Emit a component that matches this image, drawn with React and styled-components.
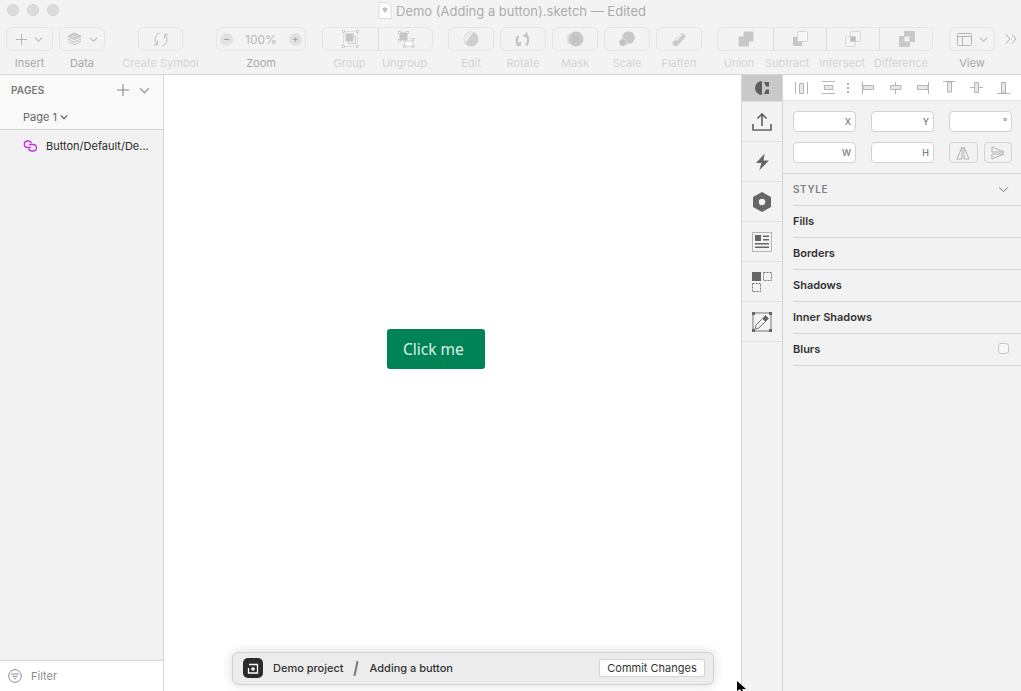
import React from "react";
import styled, { createGlobalStyle } from "styled-components";

const Global = createGlobalStyle`
  html, body { margin: 0; padding: 0; background: #fff; }
  body { font-family: Inter, "Liberation Sans", sans-serif; overflow: hidden; }
  * { box-sizing: border-box; }
`;

const Line = "#d6d6d6";

const Chevron = ({ size = 9, color = "#b5b5b5", w = 1.2 }) => (
  <svg width={size} height={size} viewBox="0 0 10 10" fill="none" stroke={color} strokeWidth={w}>
    <path d="M1 3l4 4 4-4" />
  </svg>
);

const Handle = ({ x, y }) => (
  <rect x={x - 1} y={y - 1} width="2" height="2" fill="#fff" stroke="#c0c0c0" strokeWidth=".7" />
);

const GroupIcon = () => (
  <svg width="17" height="18" viewBox="0 0 17 18">
    <rect x="1.5" y="1.5" width="14" height="15" fill="none" stroke="#dedede" />
    <rect x="3.5" y="3.5" width="8" height="8" fill="#c6c6c6" />
    <path d="M11.5 6.5h2v7h-7v-2" fill="none" stroke="#cbcbcb" />
    <Handle x={1.5} y={1.5} />
    <Handle x={15.5} y={1.5} />
    <Handle x={1.5} y={16.5} />
    <Handle x={15.5} y={16.5} />
  </svg>
);

const UngroupIcon = () => (
  <svg width="17" height="17" viewBox="0 0 17 17">
    <rect x="1.5" y="1.5" width="8" height="8" fill="#c6c6c6" />
    <rect x="6.5" y="10" width="8.5" height="5.5" fill="#fff" stroke="#d4d4d4" />
    <Handle x={1.5} y={1.5} />
    <Handle x={9.5} y={1.5} />
    <Handle x={1.5} y={9.5} />
    <Handle x={6.5} y={15.5} />
    <Handle x={15} y={15.5} />
    <Handle x={15} y={8.5} />
  </svg>
);

const EditIcon = () => (
  <svg width="16" height="16" viewBox="0 0 16 16">
    <circle cx="8" cy="8" r="7.5" fill="#cfcfcf" />
    <path d="M1 8a7 7 0 0 1 9.5-6.5L2.5 12A7 7 0 0 1 1 8z" fill="#ececec" />
  </svg>
);

const RotateIcon = () => (
  <svg width="16" height="15" viewBox="0 0 16 15" fill="none" stroke="#c4c4c4" strokeWidth="2.2">
    <path d="M10.5 3c3.5 2 3.5 7 .5 10.5" />
    <path d="M7.5 4L12.5 0v6z" fill="#c4c4c4" stroke="none" />
    <path d="M3.5 4C1 7 1 9.5 3 12" />
    <path d="M.5 14H6V9z" fill="#c4c4c4" stroke="none" />
  </svg>
);

const MaskIcon = () => (
  <svg width="17" height="16" viewBox="0 0 17 16">
    <rect x="0" y="3" width="13" height="10" fill="#e4e4e4" />
    <circle cx="9" cy="8" r="7.5" fill="#c8c8c8" />
    <rect x="5" y="4.5" width="7" height="7" fill="#c2c2c2" />
  </svg>
);

const ScaleIcon = () => (
  <svg width="16" height="16" viewBox="0 0 16 16">
    <circle cx="9.5" cy="6.5" r="6.3" fill="#c8c8c8" />
    <circle cx="4" cy="11.5" r="3.8" fill="#c4c4c4" stroke="#e6e6e6" strokeWidth=".7" />
  </svg>
);

const FlattenIcon = () => (
  <svg width="16" height="15" viewBox="0 0 16 15">
    <path d="M11 .8l4 3.6-9 9.8c-2 .9-5-1.6-4.5-4z" fill="#cbcbcb" />
    <path d="M4.5 8l6-6 1 1-6 6z" fill="#f5f5f5" />
  </svg>
);

const BoolIcon = ({ kind }) => (
  <svg width="16" height="16" viewBox="0 0 16 16">
    {kind === "union" && (
      <path d="M6 1h9v9h-4.500v5H1V6h5z" fill="#c8c8c8" stroke="#c8c8c8" strokeLinejoin="round" />
    )}
    {kind === "subtract" && (
      <>
        <rect x="5.5" y=".5" width="10" height="10" fill="#f6f6f6" stroke="#d4d4d4" rx="1" />
        <path d="M1 6h4.500v4.500H10V15H1z" fill="#c8c8c8" />
      </>
    )}
    {kind === "intersect" && (
      <>
        <rect x="5.5" y=".5" width="10" height="10" fill="none" stroke="#d8d8d8" rx="1" />
        <rect x=".5" y="5.5" width="10" height="10" fill="none" stroke="#d8d8d8" rx="1" />
        <rect x="5.5" y="5.5" width="5" height="5" fill="#bdbdbd" />
      </>
    )}
    {kind === "difference" && (
      <>
        <rect x="5" y="0" width="11" height="11" fill="#c8c8c8" rx="1" />
        <rect x="0" y="5" width="11" height="11" fill="#c8c8c8" rx="1" />
        <rect x="5.5" y="5.5" width="5" height="5" fill="#f2f2f2" />
      </>
    )}
  </svg>
);

const ViewIcon = () => (
  <svg width="15" height="13" viewBox="0 0 15 13" fill="none" stroke="#b5b5b5">
    <rect x=".5" y=".5" width="14" height="12" rx="1" />
    <path d="M.5 3.5h14M5.500 3.500v9" />
  </svg>
);

const SymbolIcon = () => (
  <svg width="14" height="15" viewBox="0 0 14 15" fill="none" stroke="#bdbdbd" strokeWidth="1">
    <path d="M5.500 1C1 2.500-.5 8.500 3 12.500" />
    <path d="M3.500 8.500v4.300H0" />
    <path d="M8.500 14c4.500-1.500 6-7.500 2.500-11.500" />
    <path d="M10.500 6.500V2.200H14" />
  </svg>
);

const LayersIcon = () => (
  <svg width="15" height="14" viewBox="0 0 15 14" fill="none" stroke="#b8b8b8" strokeWidth=".9">
    <path d="M7.500 1L14 4.300 7.500 7.600 1 4.300z" fill="#d4d4d4" />
    <path d="M1 6.800l6.500 3.300L14 6.800" />
    <path d="M1 9.300l6.500 3.300L14 9.300" />
  </svg>
);

const PlusIcon = ({ size = 11, color = "#b5b5b5" }) => (
  <svg width={size} height={size} viewBox="0 0 11 11" stroke={color} strokeWidth="1">
    <path d="M5.500 0v11M0 5.500h11" />
  </svg>
);

const FileIcon = () => (
  <svg width="14" height="17" viewBox="0 0 14 17">
    <path d="M1 .5h8.500L13 4v12.500H1z" fill="#fdfdfd" stroke="#dcdcdc" />
    <path d="M4 7l3-2 3 2-3 4z" fill="#c4c4c4" />
  </svg>
);

const SymbolLink = () => (
  <svg width="16" height="12" viewBox="0 0 16 12" fill="none" stroke="#c92fe0" strokeWidth="1.3">
    <path d="M9 7.500H5A3.300 3.300 0 0 1 5 1h1.500a3.200 3.200 0 0 1 3 2.200" />
    <path d="M7 4.500h4.200a3.200 3.200 0 0 1 0 6.500H9.500a3.200 3.200 0 0 1-3-2.200" />
  </svg>
);

const FilterIcon = () => (
  <svg width="14" height="14" viewBox="0 0 14 14" fill="none" stroke="#8a8a8a">
    <circle cx="7" cy="7" r="6.3" />
    <path d="M3 5h8M4.300 7.300h5.400M5.800 9.600h2.400" />
  </svg>
);

const Align = ({ d, box }) => (
  <svg width="16" height="16" viewBox="0 0 16 16" fill="#e8e8e8" stroke="#b4b4b4" strokeWidth="1">
    <path d={d} fill="none" />
    <path d={box} />
  </svg>
);

const alignIcons = [
  { d: "M2.500 2v12M14.500 2v12", box: "M6.500 3.500h4v10h-4z" },
  { d: "M2 1.500h13M2 13.500h13", box: "M4.500 5.500h8.500v4H4.500z" },
  null,
  { d: "M2.500 2v12", box: "M3 5.500h10.500v4H3z" },
  { d: "M8.500 2v12", box: "M3.500 5.500h10.500v4H3.500z" },
  { d: "M14.500 2v12", box: "M3.500 5.500H14v4H3.500z" },
  { d: "M2 1.500h12", box: "M6.500 2h4v10h-4z" },
  { d: "M2 7.500h13", box: "M6.500 2.500h4v10h-4z" },
  { d: "M2 13.500h13", box: "M6.500 2.500h4V13h-4z" },
];

const tabIcons = [
  <svg key="a" width="16" height="16" viewBox="0 0 16 16" fill="#5e5e5e">
    <path d="M8 1A7 7 0 0 0 8 15z" />
    <path d="M10 2h5v4.500h-3zM10 14h5V9.500h-3z" />
  </svg>,
  <svg key="b" width="20" height="20" viewBox="0 0 20 20" fill="none" stroke="#666" strokeWidth="1.7">
    <path d="M1 12v6h18v-6M10 14V2M5.500 6.500L10 2l4.500 4.500" />
  </svg>,
  <svg key="c" width="15" height="18" viewBox="0 0 14 16" fill="#666">
    <path d="M9 0L1 9h5l-2 7 9-9.500H8z" />
  </svg>,
  <svg key="d" width="18" height="20" viewBox="0 0 18 20">
    <path d="M9 0l9 5v10l-9 5-9-5V5z" fill="#666" />
    <circle cx="9" cy="10" r="3.2" fill="#f2f2f2" />
  </svg>,
  <svg key="e" width="20" height="20" viewBox="0 0 20 20" fill="#666">
    <rect x=".5" y=".5" width="19" height="19" fill="none" stroke="#777" strokeDasharray="1 1" />
    <rect x="3" y="3" width="6" height="6" />
    <path d="M11 3.500h6V5h-6zM11 7h6v1.500h-6zM3 11h14v1.500H3zM3 14.500h14V16H3z" />
  </svg>,
  <svg key="f" width="20" height="20" viewBox="0 0 20 20">
    <rect x="0" y="0" width="9" height="9" fill="#666" />
    <rect x="11.5" y=".5" width="8" height="8" fill="none" stroke="#777" strokeDasharray="2 1" />
    <rect x=".5" y="11.5" width="8" height="8" fill="none" stroke="#777" strokeDasharray="2 1" />
  </svg>,
  <svg key="g" width="20" height="20" viewBox="0 0 20 20" fill="none" stroke="#777">
    <rect x="1" y="1" width="18" height="18" />
    <path d="M3 17l1-4 8-8 3 3-8 8z" />
    <path d="M10.500 6.500l3-3 3 3-3 3z" fill="#666" />
    <rect x="0" y="0" width="3" height="3" fill="#666" stroke="none" />
    <rect x="17" y="0" width="3" height="3" fill="#666" stroke="none" />
    <rect x="0" y="17" width="3" height="3" fill="#666" stroke="none" />
    <rect x="17" y="17" width="3" height="3" fill="#666" stroke="none" />
  </svg>,
];

const App = () => (
  <Window>
    <Global />
    <Header>
      <TitleBar>
        <Lights>
          <Light />
          <Light />
          <Light />
        </Lights>
        <FileIcon />
        <Title>Demo (Adding a button).sketch — Edited</Title>
      </TitleBar>
      <Toolbar>
        <Tool $w={47}>
          <Btn $w={47}>
            <PlusIcon />
            <Chevron />
          </Btn>
          <ToolLabel>Insert</ToolLabel>
        </Tool>
        <Tool $w={46}>
          <Btn $w={46}>
            <LayersIcon />
            <Chevron />
          </Btn>
          <ToolLabel>Data</ToolLabel>
        </Tool>
        <Tool $w={77} $ml={11}>
          <Btn $w={45}>
            <SymbolIcon />
          </Btn>
          <ToolLabel $off>Create Symbol</ToolLabel>
        </Tool>
        <Tool $w={90} $ml={11}>
          <Btn $w={90}>
            <RoundBtn>−</RoundBtn>
            <Percent>100%</Percent>
            <RoundBtn>+</RoundBtn>
          </Btn>
          <ToolLabel>Zoom</ToolLabel>
        </Tool>
        <Tool $w={111} $ml={10}>
          <Segments>
            <Segment $w={55}>
              <GroupIcon />
            </Segment>
            <Segment $w={55}>
              <UngroupIcon />
            </Segment>
          </Segments>
          <LabelRow>
            <SegLabel $w={55}>Group</SegLabel>
            <SegLabel $w={55}>Ungroup</SegLabel>
          </LabelRow>
        </Tool>
        <Tool $w={46} $ml={9}>
          <Btn $w={46}>
            <EditIcon />
          </Btn>
          <ToolLabel $off>Edit</ToolLabel>
        </Tool>
        <Tool $w={46}>
          <Btn $w={46}>
            <RotateIcon />
          </Btn>
          <ToolLabel $off>Rotate</ToolLabel>
        </Tool>
        <Tool $w={46}>
          <Btn $w={46}>
            <MaskIcon />
          </Btn>
          <ToolLabel $off>Mask</ToolLabel>
        </Tool>
        <Tool $w={46}>
          <Btn $w={46}>
            <ScaleIcon />
          </Btn>
          <ToolLabel $off>Scale</ToolLabel>
        </Tool>
        <Tool $w={46}>
          <Btn $w={46}>
            <FlattenIcon />
          </Btn>
          <ToolLabel $off>Flatten</ToolLabel>
        </Tool>
        <Tool $w={216} $ml={9}>
          <Segments>
            <Segment $w={55}>
              <BoolIcon kind="union" />
            </Segment>
            <Segment $w={53}>
              <BoolIcon kind="subtract" />
            </Segment>
            <Segment $w={53}>
              <BoolIcon kind="intersect" />
            </Segment>
            <Segment $w={54}>
              <BoolIcon kind="difference" />
            </Segment>
          </Segments>
          <LabelRow>
            <SegLabel $w={44}>Union</SegLabel>
            <SegLabel $w={52}>Subtract</SegLabel>
            <SegLabel $w={58}>Intersect</SegLabel>
            <SegLabel $w={60}>Difference</SegLabel>
          </LabelRow>
        </Tool>
        <Tool $w={46} $ml={10}>
          <Btn $w={46}>
            <ViewIcon />
            <Chevron />
          </Btn>
          <ToolLabel>View</ToolLabel>
        </Tool>
        <More>
          <svg width="12" height="10" viewBox="0 0 12 10" fill="none" stroke="#b0b0b0">
            <path d="M1 .5L5 5 1 9.500M7 .5L11 5 7 9.500" />
          </svg>
        </More>
      </Toolbar>
    </Header>

    <Body>
      <Sidebar>
        <PagesPanel>
          <PagesHead>
            <PagesTitle>PAGES</PagesTitle>
            <PagesActions>
              <PlusIcon size={12} color="#8a8a8a" />
              <Chevron size={11} color="#8a8a8a" w={1} />
            </PagesActions>
          </PagesHead>
          <PageName>
            Page 1
            <Chevron size={8} color="#555" w={1.5} />
          </PageName>
        </PagesPanel>
        <Layers>
          <LayerRow>
            <SymbolLink />
            <LayerName>Button/Default/De...</LayerName>
          </LayerRow>
        </Layers>
        <FilterBar>
          <FilterIcon />
          <FilterText>Filter</FilterText>
        </FilterBar>
      </Sidebar>

      <Canvas>
        <Primary>Click me</Primary>
      </Canvas>

      <Tabs>
        {tabIcons.map((icon, i) => (
          <Tab key={i} $active={i === 0} $h={i === 0 ? 27 : 40}>
            {icon}
          </Tab>
        ))}
      </Tabs>

      <Inspector>
        <AlignBar>
          {alignIcons.map((a, i) =>
            a ? <Align key={i} d={a.d} box={a.box} /> : <Dots key={i} />
          )}
        </AlignBar>
        <Fields>
          <Field>X</Field>
          <Field>Y</Field>
          <Field>°</Field>
          <Field>W</Field>
          <Field>H</Field>
          <FlipPair>
            <Flip>
              <svg width="14" height="14" viewBox="0 0 14 14" fill="none" stroke="#b0b0b0">
                <path d="M6 1v12H1zM8 1v12h5z" />
              </svg>
            </Flip>
            <Flip>
              <svg width="14" height="14" viewBox="0 0 14 14" fill="none" stroke="#b0b0b0">
                <path d="M1 1l12 5H1zM1 8h12L1 13z" />
              </svg>
            </Flip>
          </FlipPair>
        </Fields>
        <StyleRow>
          <StyleTitle>STYLE</StyleTitle>
          <Chevron size={11} color="#777" w={0.9} />
        </StyleRow>
        <Section>Fills</Section>
        <Section>Borders</Section>
        <Section>Shadows</Section>
        <Section>Inner Shadows</Section>
        <Section>
          Blurs
          <Check />
        </Section>
      </Inspector>
    </Body>

    <CommitBar>
      <Logo>
        <svg width="12" height="11" viewBox="0 0 12 11">
          <path d="M2 1.500h8.500v8.500h-9V5" fill="none" stroke="#fff" strokeWidth="1.3" />
          <circle cx="6" cy="6" r="1.8" fill="#fff" />
        </svg>
      </Logo>
      <Crumb>Demo project</Crumb>
      <Slash />
      <Crumb>Adding a button</Crumb>
      <CommitBtn>Commit Changes</CommitBtn>
    </CommitBar>

    <Cursor>
      <svg width="10" height="12" viewBox="0 0 10 12" fill="#000">
        <path d="M0 0l9 8H5l2 4H5L3 8l-3 2z" />
      </svg>
    </Cursor>
  </Window>
);

export default App;

const Window = styled.div`
  position: relative;
  width: 1021px;
  height: 691px;
  display: flex;
  flex-direction: column;
  overflow: hidden;
  background: #fff;
`;

const Header = styled.header`
  height: 75px;
  background: #f3f3f3;
  border-bottom: 1px solid ${Line};
  flex-shrink: 0;
`;

const TitleBar = styled.div`
  position: relative;
  height: 21px;
  display: flex;
  align-items: center;
  padding-left: 378px;
  gap: 4px;
`;

const Lights = styled.div`
  position: absolute;
  left: 7px;
  top: 4px;
  display: flex;
  gap: 8px;
`;

const Light = styled.span`
  width: 12px;
  height: 12px;
  border-radius: 50%;
  background: #dcdcdc;
  border: 1px solid #d2d2d2;
`;

const Title = styled.span`
  font-size: 13px;
  color: #acacac;
  white-space: nowrap;
`;

const Toolbar = styled.div`
  display: flex;
  gap: 6px;
  padding: 6px 0 0 6px;
`;

const Tool = styled.div`
  width: ${(p) => p.$w}px;
  margin-left: ${(p) => p.$ml || 0}px;
  display: flex;
  flex-direction: column;
  align-items: center;
  flex-shrink: 0;
`;

const Btn = styled.div`
  width: ${(p) => p.$w}px;
  height: 24px;
  border: 1px solid #e5e5e5;
  border-radius: 6px;
  display: flex;
  align-items: center;
  justify-content: center;
  gap: 7px;
`;

const ToolLabel = styled.span`
  margin-top: 6px;
  font-size: 11px;
  line-height: 13px;
  white-space: nowrap;
  color: ${(p) => (p.$off ? "#d3d3d3" : "#a8a8a8")};
`;

const RoundBtn = styled.span`
  width: 13px;
  height: 13px;
  border-radius: 50%;
  background: #e2e2e2;
  color: #a0a0a0;
  font-size: 11px;
  line-height: 13px;
  text-align: center;
`;

const Percent = styled.span`
  font-size: 12px;
  color: #b8b8b8;
  margin: 0 5px;
`;

const Segments = styled.div`
  display: flex;
  height: 24px;
  border: 1px solid #e5e5e5;
  border-radius: 6px;
  width: 100%;
`;

const Segment = styled.div`
  width: ${(p) => p.$w}px;
  display: flex;
  align-items: center;
  justify-content: center;
  flex-shrink: 0;
  & + & {
    border-left: 1px solid #dedede;
  }
`;

const LabelRow = styled.div`
  display: flex;
  width: 100%;
`;

const SegLabel = styled.span`
  width: ${(p) => p.$w}px;
  margin-top: 6px;
  font-size: 11px;
  line-height: 13px;
  text-align: center;
  white-space: nowrap;
  color: #d3d3d3;
`;

const More = styled.div`
  height: 24px;
  margin-left: 4px;
  display: flex;
  align-items: center;
`;

const Body = styled.div`
  flex: 1;
  display: flex;
  min-height: 0;
`;

const Sidebar = styled.aside`
  width: 164px;
  flex-shrink: 0;
  border-right: 1px solid ${Line};
  display: flex;
  flex-direction: column;
  background: #f2f2f2;
`;

const PagesPanel = styled.div`
  height: 55px;
  background: #f9f9f9;
  border-bottom: 1px solid ${Line};
`;

const PagesHead = styled.div`
  height: 30px;
  margin-bottom: 5px;
  display: flex;
  align-items: center;
  justify-content: space-between;
  padding: 0 13px 0 11px;
`;

const PagesTitle = styled.span`
  font-size: 10px;
  font-weight: 600;
  color: #777;
  letter-spacing: 0.2px;
`;

const PagesActions = styled.span`
  display: flex;
  align-items: center;
  gap: 10px;
`;

const PageName = styled.div`
  display: flex;
  align-items: center;
  gap: 3px;
  padding-left: 23px;
  font-size: 11px;
  color: #666;
`;

const Layers = styled.div`
  flex: 1;
  padding-top: 8px;
`;

const LayerRow = styled.div`
  display: flex;
  align-items: center;
  gap: 8px;
  padding-left: 22px;
  height: 16px;
`;

const LayerName = styled.span`
  font-size: 11px;
  color: #2c2c2c;
  white-space: nowrap;
`;

const FilterBar = styled.div`
  height: 31px;
  background: #fff;
  border-top: 1px solid ${Line};
  display: flex;
  align-items: center;
  gap: 9px;
  padding-left: 8px;
`;

const FilterText = styled.span`
  font-size: 11px;
  color: #8c8c8c;
`;

const Canvas = styled.main`
  width: 577px;
  flex-shrink: 0;
  background: #fff;
  padding: 254px 0 0 223px;
`;

const Primary = styled.div`
  width: 98px;
  height: 40px;
  background: #008457;
  border-radius: 3px;
  color: #dff0e9;
  font-family: "Noto Sans", sans-serif;
  font-size: 15.5px;
  line-height: 40px;
  padding-left: 16px;
`;

const Tabs = styled.nav`
  width: 42px;
  flex-shrink: 0;
  border-left: 1px solid ${Line};
  border-right: 1px solid ${Line};
  background: #f3f3f3;
`;

const Tab = styled.div`
  height: ${(p) => p.$h}px;
  display: flex;
  align-items: center;
  justify-content: center;
  background: ${(p) => (p.$active ? "#c9c9c9" : "transparent")};
  border-bottom: 1px solid #e0e0e0;
`;

const Inspector = styled.section`
  flex: 1;
  min-width: 0;
  background: #f2f2f2;
`;

const AlignBar = styled.div`
  height: 26px;
  background: #fff;
  border-bottom: 1px solid #e2e2e2;
  display: flex;
  align-items: center;
  gap: 11px;
  padding: 0 0 0 10px;
`;

const Dots = styled.span`
  width: 2px;
  height: 12px;
  background-image: radial-gradient(circle, #aaa 1px, transparent 1px);
  background-size: 2px 4px;
`;

const Fields = styled.div`
  display: grid;
  grid-template-columns: repeat(3, 63px);
  grid-auto-rows: 21px;
  column-gap: 15px;
  row-gap: 10px;
  padding: 10px 10px;
  border-bottom: 1px solid ${Line};
  height: 73px;
`;

const Field = styled.div`
  background: #fff;
  border: 1px solid #d2d2d2;
  border-radius: 4px;
  font-size: 9px;
  font-weight: 500;
  color: #777;
  display: flex;
  align-items: center;
  justify-content: flex-end;
  padding-right: 4px;
`;

const FlipPair = styled.div`
  display: flex;
  gap: 6px;
`;

const Flip = styled.div`
  flex: 1;
  border: 1px solid #d2d2d2;
  border-radius: 4px;
  display: flex;
  align-items: center;
  justify-content: center;
`;

const StyleRow = styled.div`
  height: 32px;
  margin-left: 10px;
  border-bottom: 1px solid ${Line};
  display: flex;
  align-items: center;
  justify-content: space-between;
  padding: 0 12px 1px 0;
`;

const StyleTitle = styled.span`
  font-size: 10px;
  font-weight: 600;
  color: #808080;
  letter-spacing: 0.6px;
`;

const Section = styled.div`
  height: 32px;
  margin-left: 10px;
  border-bottom: 1px solid ${Line};
  display: flex;
  align-items: center;
  justify-content: space-between;
  padding: 0 12px 2px 0;
  font-size: 11px;
  font-weight: 600;
  color: #333;
`;

const Check = styled.span`
  width: 11px;
  height: 11px;
  border: 1px solid #c8c8c8;
  border-radius: 3px;
  background: #f6f6f6;
`;

const CommitBar = styled.div`
  position: absolute;
  left: 232px;
  top: 652px;
  width: 482px;
  height: 33px;
  background: #ececec;
  border: 1px solid #d2d2d2;
  border-radius: 6px;
  box-shadow: 0 0 12px rgba(0, 0, 0, 0.14);
  display: flex;
  align-items: center;
  padding: 0 8px 1px 10px;
`;

const Logo = styled.div`
  width: 20px;
  height: 20px;
  border-radius: 5px;
  background: #2b2b2b;
  display: flex;
  align-items: center;
  justify-content: center;
  margin-right: 10px;
`;

const Crumb = styled.span`
  font-size: 11px;
  font-weight: 500;
  color: #333;
  white-space: nowrap;
`;

const Slash = styled.span`
  width: 2px;
  height: 15px;
  background: #777;
  transform: rotate(12deg);
  margin: 0 13px 0 11px;
`;

const CommitBtn = styled.div`
  margin-left: auto;
  width: 106px;
  height: 18px;
  background: #fff;
  border: 1px solid #d4d4d4;
  border-radius: 3px;
  font-size: 11px;
  line-height: 16px;
  text-align: center;
  color: #333;
`;

const Cursor = styled.div`
  position: absolute;
  left: 737px;
  top: 681px;
  line-height: 0;
`;
